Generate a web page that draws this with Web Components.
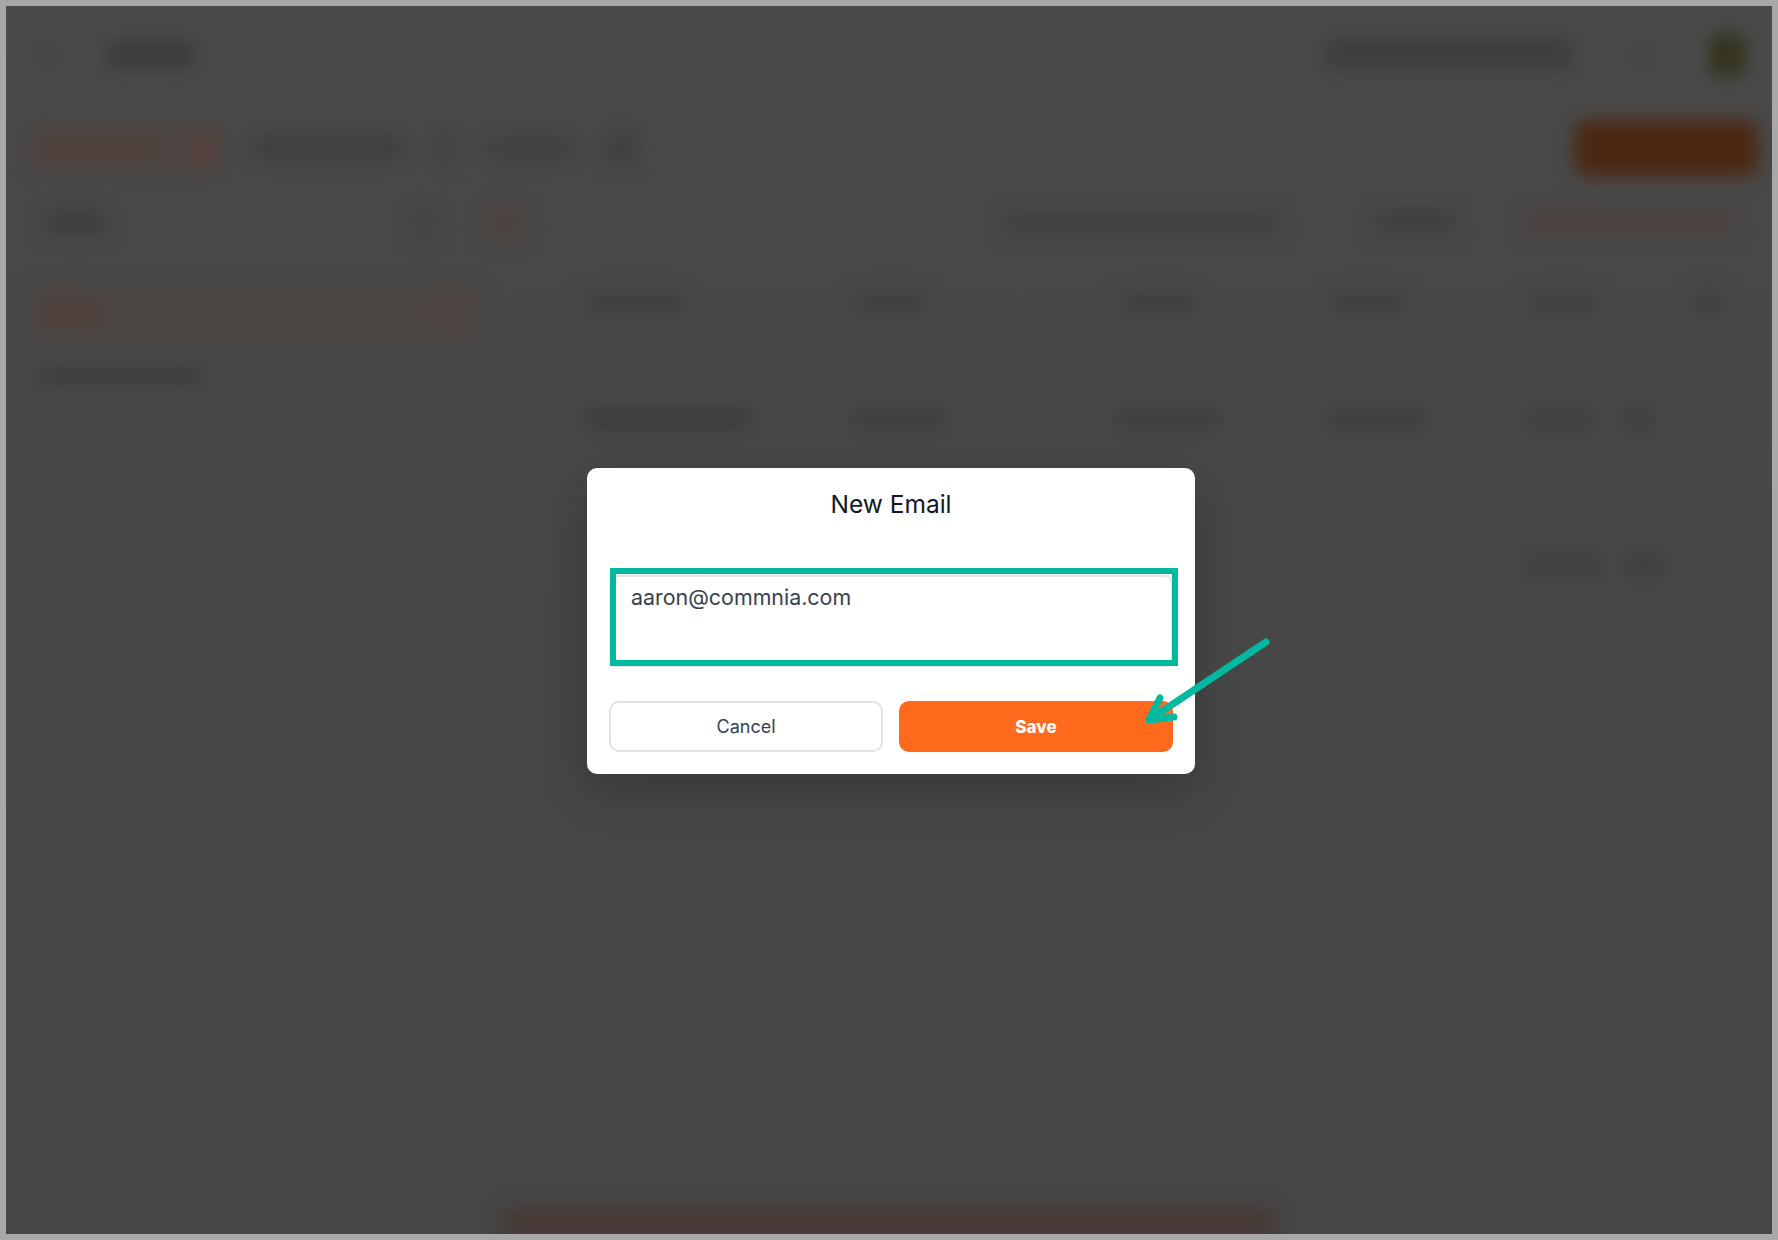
<!DOCTYPE html>
<html lang="en">
<head>
<meta charset="utf-8">
<title>New Email</title>
<style>
  html, body { margin: 0; height: 100%; background: #a8a8a8; }
</style>
</head>
<body>

<screen-frame>
  <page-backdrop slot="backdrop">
    <smudge-row h="50" top="24">
      <smudge-bar gap="34" w="16" h="24" c="#444"></smudge-bar>
      <smudge-bar gap="50" w="88" h="28" c="#3c3c3c"></smudge-bar>
      <smudge-bar gap="1130" w="250" h="32" c="#3e3e3e"></smudge-bar>
      <smudge-bar gap="58" w="18" h="22" c="#444"></smudge-bar>
      <smudge-bar gap="60" w="35" h="42" c="#33331c"></smudge-bar>
    </smudge-row>
    <smudge-row h="60" top="38">
      <smudge-bar gap="22" w="194" h="44" c="#4c4541">
        <smudge-bar gap="10" w="118" h="22" c="#513f3a"></smudge-bar>
        <smudge-bar gap="34" w="25" h="40" c="#56423c"></smudge-bar>
      </smudge-bar>
      <smudge-bar gap="29" w="154" h="26" c="#404040"></smudge-bar>
      <smudge-bar gap="29" w="22" h="40" c="#434343"></smudge-bar>
      <smudge-bar gap="28" w="92" h="26" c="#414141"></smudge-bar>
      <smudge-bar gap="30" w="32" h="40" c="#414141"></smudge-bar>
      <smudge-bar gap="936" w="184" h="56" r="10" c="#4b2812"></smudge-bar>
    </smudge-row>
    <smudge-row h="44" top="22">
      <smudge-bar gap="39" w="60" h="28" c="#3f3f3f"></smudge-bar>
      <smudge-bar gap="307" w="24" h="32" c="#434343"></smudge-bar>
      <smudge-bar gap="49" w="40" h="34" c="#4c4340"></smudge-bar>
      <smudge-bar gap="480" w="275" h="26" c="#404140"></smudge-bar>
      <smudge-bar gap="95" w="80" h="26" c="#404040"></smudge-bar>
      <smudge-bar gap="70" w="210" h="26" c="#4a4240"></smudge-bar>
    </smudge-row>
    <two-panes>
      <side-pane slot="side">
        <smudge-row h="48" top="45">
          <smudge-bar gap="24" w="450" h="48" r="6" c="#4b4541">
            <smudge-bar gap="8" w="62" h="22" c="#523f3a"></smudge-bar>
            <smudge-bar gap="338" w="30" h="30" c="#504340"></smudge-bar>
          </smudge-bar>
        </smudge-row>
        <smudge-row h="30" top="24">
          <smudge-bar gap="32" w="166" h="22" c="#3f3f3f"></smudge-bar>
          <smudge-bar gap="192" w="12" h="24" c="#454545"></smudge-bar>
          <smudge-bar gap="38" w="12" h="24" c="#454545"></smudge-bar>
        </smudge-row>
      </side-pane>
      <main-pane slot="main">
        <smudge-row h="30" top="44">
          <smudge-bar gap="81" w="97" h="22" c="#3f3f3f"></smudge-bar>
          <smudge-bar gap="174" w="68" h="22" c="#3f3f3f"></smudge-bar>
          <smudge-bar gap="198" w="72" h="22" c="#3f3f3f"></smudge-bar>
          <smudge-bar gap="138" w="72" h="22" c="#3f3f3f"></smudge-bar>
          <smudge-bar gap="125" w="68" h="22" c="#404040"></smudge-bar>
          <smudge-bar gap="98" w="26" h="30" c="#404040"></smudge-bar>
        </smudge-row>
        <smudge-row h="30" top="86">
          <smudge-bar gap="81" w="167" h="22" c="#3d3d3d"></smudge-bar>
          <smudge-bar gap="100" w="92" h="22" c="#3f3f3f"></smudge-bar>
          <smudge-bar gap="172" w="104" h="22" c="#3f3f3f"></smudge-bar>
          <smudge-bar gap="106" w="98" h="22" c="#3f3f3f"></smudge-bar>
          <smudge-bar gap="100" w="72" h="22" c="#404040"></smudge-bar>
          <smudge-bar gap="28" w="30" h="30" c="#414141"></smudge-bar>
        </smudge-row>
        <smudge-row h="30" top="116">
          <smudge-bar gap="1021" w="75" h="22" c="#404040"></smudge-bar>
          <smudge-bar gap="27" w="34" h="30" c="#414141"></smudge-bar>
        </smudge-row>
      </main-pane>
    </two-panes>
    <smudge-row h="24">
      <smudge-bar gap="496" w="772" h="24" r="0" c="#483732"></smudge-bar>
    </smudge-row>
  </page-backdrop>

  <email-dialog heading="New Email">
    <email-field>aaron@commnia.com</email-field>
    <dialog-button slot="actions">Cancel</dialog-button>
    <dialog-button slot="actions" primary>Save</dialog-button>
  </email-dialog>
</screen-frame>

<script>
  // Marco gris alrededor de la captura, con el fondo difuminado y el modal encima
  class ScreenFrame extends HTMLElement {
    constructor() {
      super();
      this.attachShadow({ mode: 'open' });
      this.shadowRoot.innerHTML = `
        <style>
          :host {
            display: block;
            box-sizing: border-box;
            width: 1778px;
            height: 1240px;
            padding: 6px;
            background: #a8a8a8;
          }
          #screen {
            position: relative;
            height: 100%;
            overflow: hidden;
            background: linear-gradient(#4a4a4a, #474747 45%, #464646);
          }
          #overlay {
            position: absolute;
            inset: 0;
            display: flex;
            justify-content: center;
            align-items: center;
            padding: 2px 0 0 4px;
            box-sizing: border-box;
          }
        </style>
        <div id="screen">
          <slot name="backdrop"></slot>
          <div id="overlay"><slot></slot></div>
        </div>
      `;
    }
  }

  // Página de fondo, sin texto legible: solo manchas difuminadas
  class PageBackdrop extends HTMLElement {
    constructor() {
      super();
      this.attachShadow({ mode: 'open' });
      this.shadowRoot.innerHTML = `
        <style>
          :host {
            display: flex;
            flex-direction: column;
            height: 100%;
            filter: blur(9px);
          }
          ::slotted(two-panes) { flex: 1; }
        </style>
        <slot></slot>
      `;
    }
  }

  class TwoPanes extends HTMLElement {
    constructor() {
      super();
      this.attachShadow({ mode: 'open' });
      this.shadowRoot.innerHTML = `
        <style>
          :host { display: flex; }
          #side { width: 498px; flex: none; }
          #main { flex: 1; }
        </style>
        <div id="side"><slot name="side"></slot></div>
        <div id="main"><slot name="main"></slot></div>
      `;
    }
  }

  class SidePane extends HTMLElement {
    constructor() {
      super();
      this.attachShadow({ mode: 'open' });
      this.shadowRoot.innerHTML = `<style>:host { display: block; }</style><slot></slot>`;
    }
  }

  class MainPane extends HTMLElement {
    constructor() {
      super();
      this.attachShadow({ mode: 'open' });
      this.shadowRoot.innerHTML = `<style>:host { display: block; }</style><slot></slot>`;
    }
  }

  class SmudgeRow extends HTMLElement {
    constructor() {
      super();
      this.attachShadow({ mode: 'open' });
      this.shadowRoot.innerHTML = `
        <style>
          :host { display: flex; align-items: center; flex: none; }
        </style>
        <slot></slot>
      `;
    }

    connectedCallback() {
      this.style.height = this.getAttribute('h') + 'px';
      this.style.marginTop = (this.getAttribute('top') || 0) + 'px';
    }
  }

  class SmudgeBar extends HTMLElement {
    constructor() {
      super();
      this.attachShadow({ mode: 'open' });
      this.shadowRoot.innerHTML = `
        <style>
          :host { display: flex; align-items: center; flex: none; }
        </style>
        <slot></slot>
      `;
    }

    connectedCallback() {
      this.style.marginLeft = this.getAttribute('gap') + 'px';
      this.style.width = this.getAttribute('w') + 'px';
      this.style.height = this.getAttribute('h') + 'px';
      this.style.background = this.getAttribute('c');
      this.style.borderRadius = (this.getAttribute('r') || 4) + 'px';
    }
  }

  class EmailDialog extends HTMLElement {
    constructor() {
      super();
      this.attachShadow({ mode: 'open' });
      this.shadowRoot.innerHTML = `
        <style>
          :host {
            display: block;
            position: relative;
            box-sizing: border-box;
            width: 608px;
            height: 306px;
            padding: 19px 22px 22px;
            background: #fff;
            border-radius: 10px;
            box-shadow: 0 16px 50px rgba(0, 0, 0, .22);
            font-family: Inter, "Liberation Sans", sans-serif;
          }
          h2 {
            margin: 0 0 54px;
            font-size: 24.5px;
            line-height: 34px;
            font-weight: 400;
            color: #111827;
            text-align: center;
          }
          #actions {
            display: grid;
            grid-template-columns: 274px 274px;
            column-gap: 16px;
            margin-top: 34px;
          }
          svg {
            position: absolute;
            left: 0;
            top: 0;
            overflow: visible;
          }
        </style>
        <h2></h2>
        <slot></slot>
        <div id="actions"><slot name="actions"></slot></div>
        <svg width="608" height="306" viewBox="0 0 608 306" fill="none" stroke="#00b9a0" stroke-width="7" stroke-linecap="round" stroke-linejoin="round">
          <path d="M679 174L562 252"></path>
          <path d="M573 230L562 252L587 249"></path>
        </svg>
      `;
    }

    connectedCallback() {
      this.shadowRoot.querySelector('h2').textContent = this.getAttribute('heading');
    }
  }

  class EmailField extends HTMLElement {
    constructor() {
      super();
      this.attachShadow({ mode: 'open' });
      this.shadowRoot.innerHTML = `
        <style>
          :host {
            display: block;
            position: relative;
            box-sizing: border-box;
            height: 92px;
            padding: 6px 20px;
            border: 2px solid #e5e7eb;
            border-radius: 8px;
            font-size: 21.4px;
            line-height: 28px;
            color: #374151;
          }
          /* Recuadro de la anotación, por encima del campo */
          #mark {
            position: absolute;
            left: -1px;
            top: -9px;
            right: -7px;
            bottom: -1px;
            border: 6px solid #00b9a0;
          }
        </style>
        <slot></slot>
        <div id="mark"></div>
      `;
    }
  }

  class DialogButton extends HTMLElement {
    constructor() {
      super();
      this.attachShadow({ mode: 'open' });
      this.shadowRoot.innerHTML = `
        <style>
          :host {
            display: flex;
            justify-content: center;
            align-items: center;
            box-sizing: border-box;
            height: 51px;
            border: 2px solid #e0e3ea;
            border-radius: 10px;
            background: #fff;
            color: #374151;
            font-size: 18px;
            font-weight: 400;
          }
          :host([primary]) {
            background: #ff6a1c;
            border-color: #ff6a1c;
            color: #fff;
            font-size: 17px;
            font-weight: 800;
          }
        </style>
        <slot></slot>
      `;
    }
  }

  customElements.define('smudge-bar', SmudgeBar);
  customElements.define('smudge-row', SmudgeRow);
  customElements.define('side-pane', SidePane);
  customElements.define('main-pane', MainPane);
  customElements.define('two-panes', TwoPanes);
  customElements.define('page-backdrop', PageBackdrop);
  customElements.define('email-field', EmailField);
  customElements.define('dialog-button', DialogButton);
  customElements.define('email-dialog', EmailDialog);
  customElements.define('screen-frame', ScreenFrame);
</script>
</body>
</html>
